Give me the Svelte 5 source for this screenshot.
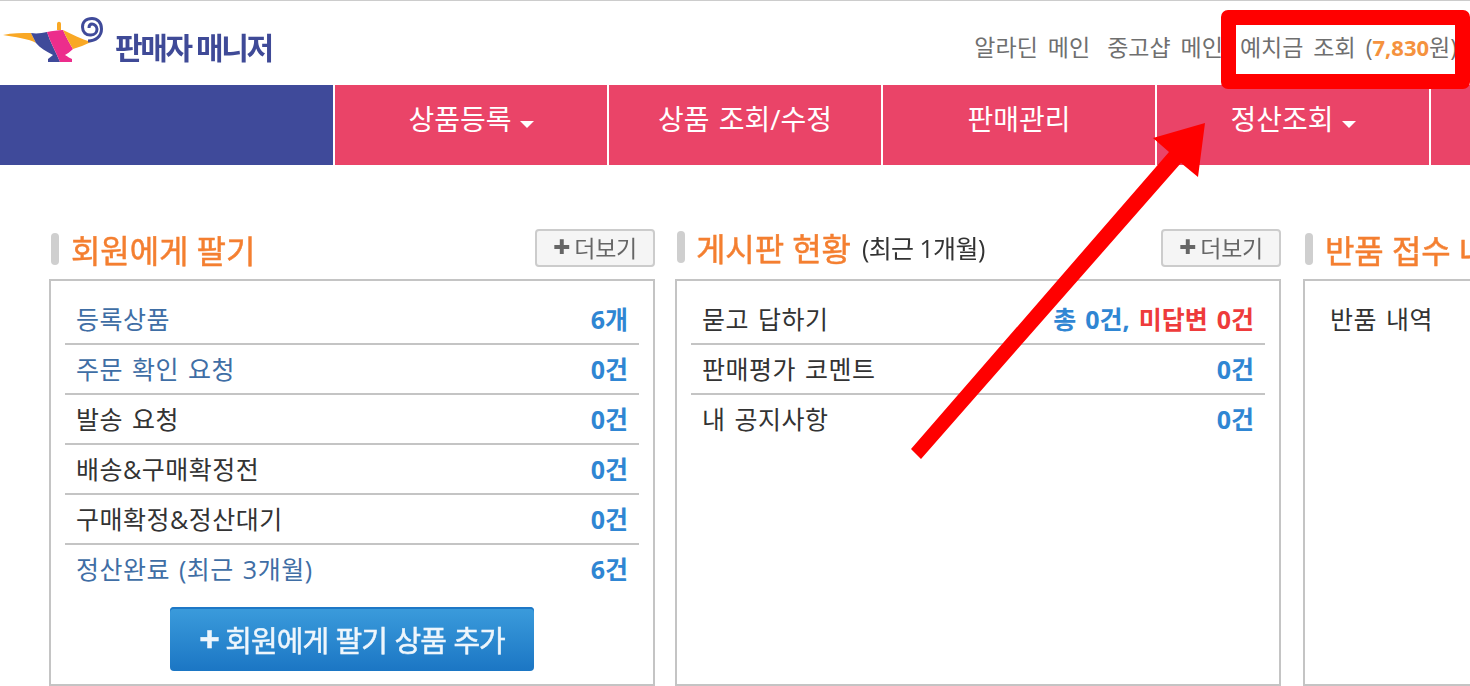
<script>
  let sellRows = [
    { label: "등록상품", value: "6개", link: true },
    { label: "주문 확인 요청", value: "0건", link: true },
    { label: "발송 요청", value: "0건" },
    { label: "배송&구매확정전", value: "0건" },
    { label: "구매확정&정산대기", value: "0건" },
    { label: "정산완료 (최근 3개월)", value: "6건", link: true }
  ];
  let boardRows = [
    { label: "판매평가 코멘트", value: "0건" },
    { label: "내 공지사항", value: "0건" }
  ];
</script>

<style>
  :global(body) {
    margin: 0;
    background: #fff;
    overflow: hidden;
  }

  .page {
    position: relative;
    height: 686px;
    overflow: hidden;
    font-family: "Open Sans", "Noto Sans CJK KR", sans-serif;
    color: #333;
  }

  /* Header */
  .header {
    height: 84px;
    border-top: 1px solid #ccc;
    display: flex;
    align-items: center;
    justify-content: space-between;
    padding-right: 13px;
  }
  .logo {
    display: flex;
    align-items: center;
    gap: 1px;
  }
  .logo svg {
    display: block;
    filter: blur(0.4px);
  }
  .logo-text {
    font-size: 30px;
    font-weight: 700;
    letter-spacing: -2.4px;
    color: #3f4a97;
    filter: blur(0.5px);
    margin-top: 6px;
  }
  .top-links {
    display: flex;
    gap: 17px;
    font-size: 23px;
    word-spacing: 4px;
    color: #6f6f6f;
    margin-top: 6px;
  }
  .top-links b {
    font-size: 22px;
    color: #f5923e;
  }

  /* Nav */
  .nav {
    display: flex;
    gap: 2px;
    height: 80px;
  }
  .nav-blue {
    width: 333px;
    background: #3f4a9a;
  }
  .nav-item {
    width: 272px;
    background: #ea4468;
    color: #fff;
    font-size: 28px;
    word-spacing: 2px;
    display: flex;
    justify-content: center;
    align-items: flex-start;
    padding-top: 13px;
    box-sizing: border-box;
    gap: 8px;
  }
  .nav-item.last {
    flex: 1;
  }
  .caret {
    width: 0;
    height: 0;
    margin-top: 23px;
    border-left: 7.5px solid transparent;
    border-right: 7.5px solid transparent;
    border-top: 7px solid #fff;
  }

  /* Columns */
  .columns {
    display: flex;
    gap: 20px;
    padding: 64px 0 0 49px;
  }
  .col {
    width: 606px;
    flex: none;
  }
  .col.third {
    margin-left: 2px;
  }
  .col-head {
    height: 50px;
    display: flex;
    justify-content: space-between;
    align-items: flex-start;
  }
  .col-title {
    display: flex;
    align-items: center;
    padding: 1px 0 0 2px;
    height: 38px;
    box-sizing: border-box;
  }
  .col-title.raised {
    margin-top: -2px;
  }
  .title-bar {
    width: 8px;
    height: 32px;
    border-radius: 4px;
    background: #cfcfcf;
    margin-right: 12px;
    flex: none;
  }
  .raised .title-bar {
    margin-right: 11px;
  }
  .col-title h2 {
    margin: 0;
    font-size: 32px;
    font-weight: 400;
    letter-spacing: -0.1px;
    -webkit-text-stroke: 0.5px #f47f30;
    color: #f47f30;
    filter: blur(0.4px);
    white-space: nowrap;
  }
  .col-title small {
    font-size: 25px;
    letter-spacing: -0.6px;
    color: #333;
    margin-left: 11px;
    filter: blur(0.4px);
    white-space: nowrap;
  }
  .more {
    width: 120px;
    height: 38px;
    box-sizing: border-box;
    border: 2px solid #ccc;
    border-radius: 4px;
    background: #f5f5f5;
    color: #666;
    font-family: inherit;
    font-size: 23px;
    padding: 0;
    line-height: 1;
    letter-spacing: -0.3px;
    filter: blur(0.2px);
  }
  .more b {
    font-size: 30px;
    line-height: 0;
    font-weight: 800;
    color: #666;
    margin-right: 4px;
  }

  /* Panels */
  .panel {
    height: 407px;
    box-sizing: border-box;
    border: 2px solid #c4c4c4;
    padding: 14px 14px 0;
  }
  .row {
    height: 50px;
    box-sizing: border-box;
    border-bottom: 2px solid #c4c4c4;
    display: flex;
    justify-content: space-between;
    padding: 5px 11px 0;
    font-size: 25px;
    letter-spacing: 0.5px;
    word-spacing: 2px;
    color: #333;
    line-height: 38px;
    white-space: nowrap;
  }
  .row.plain {
    border-bottom: none;
  }
  .row .link {
    color: #3f6ea5;
  }
  .val {
    font-weight: 700;
    color: #2f86d3;
    font-size: 25px;
    letter-spacing: 0;
    word-spacing: 2.5px;
  }
  .val i {
    font-style: normal;
    color: #ee3b3b;
  }
  .add {
    display: block;
    width: 364px;
    height: 64px;
    margin: 12px auto 0;
    border: none;
    border-radius: 4px;
    background: linear-gradient(#3b9cdc, #1b76c4);
    box-shadow: inset 0 2px 0 #1f78c6;
    color: #eef6fc;
    font-family: inherit;
    font-size: 29px;
    letter-spacing: -1px;
    word-spacing: 1px;
    -webkit-text-stroke: 0.5px #eef6fc;
    padding: 0;
  }
  .add span {
    display: block;
    filter: blur(0.4px);
  }
  .add b {
    font-size: 36px;
    line-height: 0;
    margin-right: -1px;
  }

  /* Annotation drawn over the screenshot */
  .red-box {
    position: absolute;
    left: 1221px;
    top: 10px;
    width: 249px;
    height: 79px;
    box-sizing: border-box;
    border: 15px solid #f00;
    border-radius: 7px;
  }
  .arrow {
    position: absolute;
    left: 0;
    top: 0;
  }
</style>

<div class="page">
  <div class="header">
    <div class="logo">
      <svg width="114" height="84" viewBox="0 1 114 84">
        <path d="M3 35 C12 33 22 33 31 33 L36 43 C30 39 14 37 3 35Z" fill="#f9a825" />
        <path d="M31 33 C37 34 42 33 47 32 C50 42 56 52 60 62 L48 62 L48 59 L53 55 C46 51 40 48 36 43Z" fill="#3f4a9a" />
        <path d="M47 32 C52 31 58 30 63 30 C66 37 70 44 73 49 C70 52 67 54 65 55 C68 57 70 58 72 59 L72 62 L60 62 C56 52 50 42 47 32Z" fill="#ec2d8c" />
        <path d="M63 30 C72 34 81 39 91 42 C85 45 79 47 73 49 C70 44 66 37 63 30Z" fill="#f9a825" />
        <path d="M57 30 L57 24 C57 21 61 21 61 24 L61 30Z" fill="#f9a825" />
        <path d="M88 41 C96 41 101.500 36 101.500 29 C101.500 22 97 18.500 92 18.500 C86 18.500 82.500 22 82.500 27 C82.500 32 86 35.500 91 35 C95 35 97 32 97 29 C97 26 94 24 92 24 C90 24 89 26 89 28" fill="none" stroke="#3f4a9a" stroke-width="3" />
      </svg>
      <span class="logo-text">판매자 매니저</span>
    </div>
    <div class="top-links">
      <span>알라딘 메인</span>
      <span>중고샵 메인</span>
      <span>예치금 조회 (<b>7,830</b>원)</span>
    </div>
  </div>

  <div class="nav">
    <div class="nav-blue"></div>
    <div class="nav-item">상품등록<span class="caret"></span></div>
    <div class="nav-item">상품 조회/수정</div>
    <div class="nav-item">판매관리</div>
    <div class="nav-item">정산조회<span class="caret"></span></div>
    <div class="nav-item last"></div>
  </div>

  <div class="columns">
    <section class="col">
      <div class="col-head">
        <div class="col-title"><span class="title-bar"></span><h2>회원에게 팔기</h2></div>
        <button class="more"><b>+</b>더보기</button>
      </div>
      <div class="panel">
        {#each sellRows as row, i}
          <div class="row" class:plain={i === sellRows.length - 1}>
            <span class:link={row.link}>{row.label}</span>
            <span class="val">{row.value}</span>
          </div>
        {/each}
        <button class="add"><span><b>+</b> 회원에게 팔기 상품 추가</span></button>
      </div>
    </section>

    <section class="col">
      <div class="col-head">
        <div class="col-title raised"><span class="title-bar"></span><h2>게시판 현황</h2><small>(최근 1개월)</small></div>
        <button class="more"><b>+</b>더보기</button>
      </div>
      <div class="panel">
        <div class="row">
          <span>묻고 답하기</span>
          <span class="val">총 0건, <i>미답변 0건</i></span>
        </div>
        {#each boardRows as row}
          <div class="row" class:plain={row === boardRows[boardRows.length - 1]}>
            <span>{row.label}</span>
            <span class="val">{row.value}</span>
          </div>
        {/each}
      </div>
    </section>

    <section class="col third">
      <div class="col-head">
        <div class="col-title"><span class="title-bar"></span><h2>반품 접수 내역</h2></div>
      </div>
      <div class="panel">
        <div class="row plain"><span>반품 내역</span></div>
      </div>
    </section>
  </div>

  <div class="red-box"></div>
  <svg class="arrow" width="1470" height="686" viewBox="0 0 1470 686">
    <polygon points="911,449 921,459 1181,163 1198,177 1205,123 1153,138 1169,152" fill="#f00" />
  </svg>
</div>
